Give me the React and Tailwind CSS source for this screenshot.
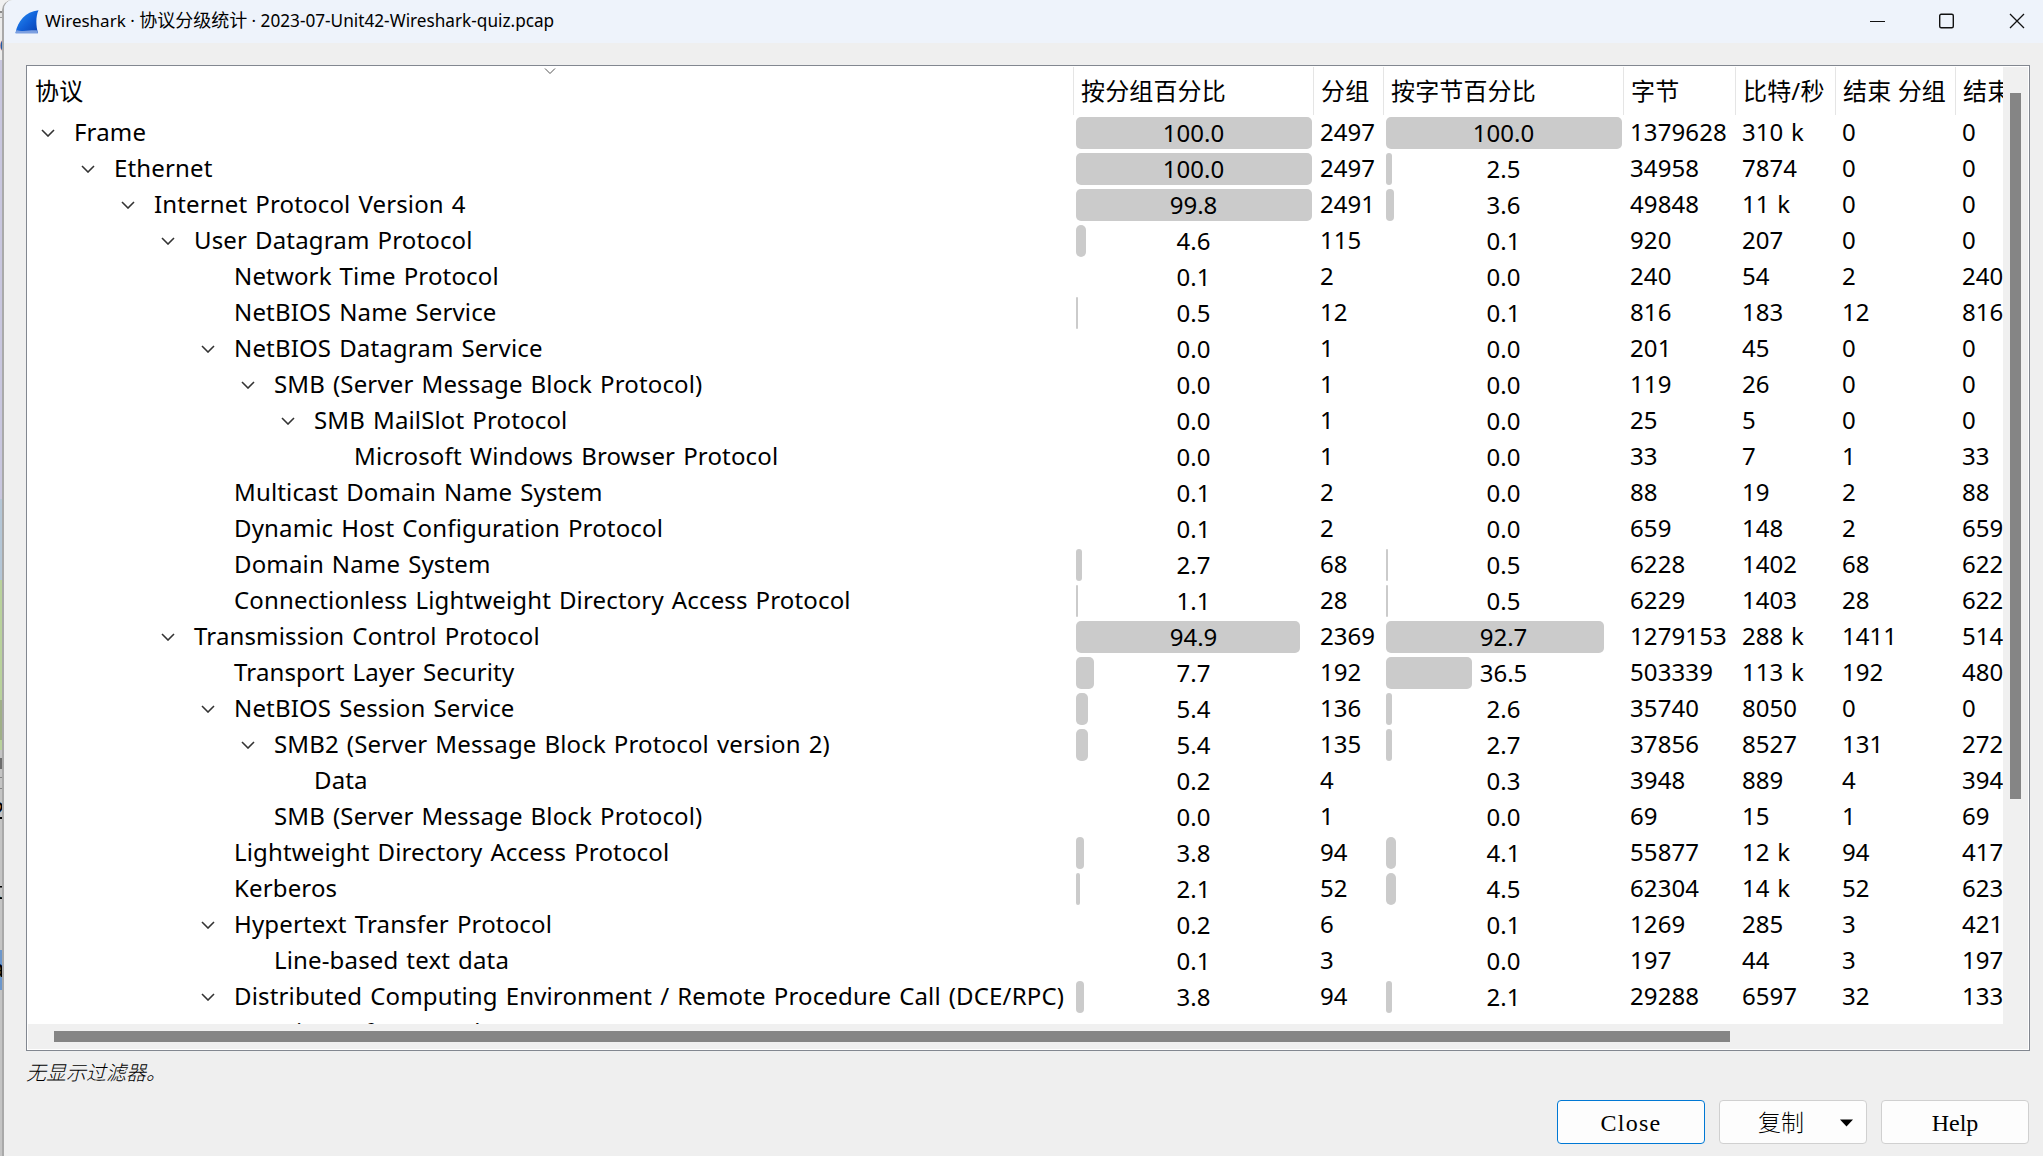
import React from "react";

const COLUMNS = "grid grid-cols-[1045px_240px_70px_240px_112px_100px_120px_49px]";

// [level, expandable, name, packet %, packets, byte %, bytes, bits/s, end packets, end bytes, packet bar px, byte bar px]
const ROWS = [
  [0, 1, "Frame", "100.0", "2497", "100.0", "1379628", "310 k", "0", "0", 236, 236],
  [1, 1, "Ethernet", "100.0", "2497", "2.5", "34958", "7874", "0", "0", 236, 6],
  [2, 1, "Internet Protocol Version 4", "99.8", "2491", "3.6", "49848", "11 k", "0", "0", 236, 8],
  [3, 1, "User Datagram Protocol", "4.6", "115", "0.1", "920", "207", "0", "0", 10, 0],
  [4, 0, "Network Time Protocol", "0.1", "2", "0.0", "240", "54", "2", "240", 0, 0],
  [4, 0, "NetBIOS Name Service", "0.5", "12", "0.1", "816", "183", "12", "816", 2, 0],
  [4, 1, "NetBIOS Datagram Service", "0.0", "1", "0.0", "201", "45", "0", "0", 0, 0],
  [5, 1, "SMB (Server Message Block Protocol)", "0.0", "1", "0.0", "119", "26", "0", "0", 0, 0],
  [6, 1, "SMB MailSlot Protocol", "0.0", "1", "0.0", "25", "5", "0", "0", 0, 0],
  [7, 0, "Microsoft Windows Browser Protocol", "0.0", "1", "0.0", "33", "7", "1", "33", 0, 0],
  [4, 0, "Multicast Domain Name System", "0.1", "2", "0.0", "88", "19", "2", "88", 0, 0],
  [4, 0, "Dynamic Host Configuration Protocol", "0.1", "2", "0.0", "659", "148", "2", "659", 0, 0],
  [4, 0, "Domain Name System", "2.7", "68", "0.5", "6228", "1402", "68", "622", 6, 2],
  [4, 0, "Connectionless Lightweight Directory Access Protocol", "1.1", "28", "0.5", "6229", "1403", "28", "622", 2, 2],
  [3, 1, "Transmission Control Protocol", "94.9", "2369", "92.7", "1279153", "288 k", "1411", "514", 224, 218],
  [4, 0, "Transport Layer Security", "7.7", "192", "36.5", "503339", "113 k", "192", "480", 18, 86],
  [4, 1, "NetBIOS Session Service", "5.4", "136", "2.6", "35740", "8050", "0", "0", 12, 6],
  [5, 1, "SMB2 (Server Message Block Protocol version 2)", "5.4", "135", "2.7", "37856", "8527", "131", "272", 12, 6],
  [6, 0, "Data", "0.2", "4", "0.3", "3948", "889", "4", "394", 0, 0],
  [5, 0, "SMB (Server Message Block Protocol)", "0.0", "1", "0.0", "69", "15", "1", "69", 0, 0],
  [4, 0, "Lightweight Directory Access Protocol", "3.8", "94", "4.1", "55877", "12 k", "94", "417", 8, 10],
  [4, 0, "Kerberos", "2.1", "52", "4.5", "62304", "14 k", "52", "623", 4, 10],
  [4, 1, "Hypertext Transfer Protocol", "0.2", "6", "0.1", "1269", "285", "3", "421", 0, 0],
  [5, 0, "Line-based text data", "0.1", "3", "0.0", "197", "44", "3", "197", 0, 0],
  [4, 1, "Distributed Computing Environment / Remote Procedure Call (DCE/RPC)", "3.8", "94", "2.1", "29288", "6597", "32", "133", 8, 6],
  [5, 0, "Microsoft Network Logon", "", "", "", "", "", "", "", 0, 0],
];

const HEADERS = ["按分组百分比", "分组", "按字节百分比", "字节", "比特/秒", "结束 分组", "结束"];

function Chevron() {
  return (
    <svg className="h-[8px] w-[14px]" viewBox="0 0 14 8" fill="none" stroke="#333" strokeWidth="1.6">
      <path d="M1 1l6 6 6-6" />
    </svg>
  );
}

function Bar({ value, width }) {
  return (
    <div className="relative h-8 pl-[3px] pt-[2px]">
      {width > 0 && <div className="h-8 rounded-[5px] bg-[#cbcbcb]" style={{ width }} />}
      <span className="absolute left-px top-0 w-[239px] pt-px text-center">{value}</span>
    </div>
  );
}

function Row({ row }) {
  const [level, open, name, pp, packets, bp, bytes, bits, ep, eb, pw, bw] = row;
  return (
    <div className={COLUMNS + " h-9 leading-[34px]"}>
      <div className="flex" style={{ paddingLeft: 13 + level * 40 }}>
        <span className="flex h-[35px] w-[33px] shrink-0 items-center">{open ? <Chevron /> : null}</span>
        <span className="tracking-[0.15px] [word-spacing:1.6px]">{name}</span>
      </div>
      <Bar value={pp} width={pw} />
      <span className="pl-[7px]">{packets}</span>
      <Bar value={bp} width={bw} />
      <span className="pl-[7px] tracking-[0.1px]">{bytes}</span>
      <span className="pl-[7px] [word-spacing:1.5px]">{bits}</span>
      <span className="pl-[7px]">{ep}</span>
      <span className="pl-[7px]">{eb}</span>
    </div>
  );
}

// Sliver of the window that lies behind the dialog
function BackWindow() {
  return (
    <div className="-mr-[8px] flex w-[12px] shrink-0 flex-col overflow-hidden bg-[#c4c4c4] text-[24px] leading-[20px]">
      <div className="h-[11px] bg-[#f0f0f0]" />
      <div className="h-[2px] bg-[#8c8c8c]" />
      <div className="h-[4px] bg-[#e2e2e2]" />
      <div className="h-px bg-[#a0a0a0]" />
      <div className="h-[42px] bg-[#ececec] pt-[15px]">
        <span className="-ml-[1px] text-[#1c5fa8]">c</span>
      </div>
      <div className="h-[439px] bg-[#c8c6de]" />
      <div className="h-[81px] bg-[#b4c6d6]" />
      <div className="h-[120px] bg-[#b9d29c]" />
      <div className="h-[40px] bg-[#a0b088]" />
      <div className="h-[10px] bg-[#b9d29c]" />
      <div className="mt-[8px] h-[11px] bg-[#6d6d6d]" />
      <div className="mt-[8px] h-[12px] border-y border-[#858585]" />
      <div className="mt-[11px] h-[20px]">
        <span className="-ml-[9px]">2</span>
      </div>
      <div className="mt-[60px] h-[20px]">
        <span className="-ml-[5px]">t</span>
      </div>
      <div className="mt-[50px] h-[40px] bg-[#6c97cc] pt-[8px]">
        <span className="-ml-[9px]">a</span>
      </div>
    </div>
  );
}

function TitleBar() {
  return (
    <div className="flex h-[43px] shrink-0 items-center rounded-tl-[9px] bg-[#eef3fb] pl-[11px]">
      <svg className="h-[24px] w-[24px]" viewBox="0 0 24 24">
        <defs>
          <linearGradient id="fin" x1="0" y1="0" x2="1" y2="1">
            <stop offset="0" stopColor="#2a93f5" />
            <stop offset="0.55" stopColor="#1160d8" />
            <stop offset="1" stopColor="#0a3fae" />
          </linearGradient>
        </defs>
        <path d="M0.500 23C3 11 10 2 23.500 0.300C20.500 7 21 16 23 23Z" fill="url(#fin)" />
        <path d="M0.500 23.500L1.500 20C8 22.500 16 19.500 22.300 20.500L23 23.500Z" fill="#7c9fe0" />
      </svg>
      <span className="-mt-[2px] ml-[6px] whitespace-pre text-[17px] leading-6">
        Wireshark · <span className="text-[18px]">协议分级统计</span> · <span className="text-[17.2px]">2023-07-Unit42-Wireshark-quiz.pcap</span>
      </span>
      <div className="-mt-[2px] ml-auto mr-[18px] flex items-center">
        <svg className="h-[16px] w-[156px]" viewBox="0 0 156 16" fill="none" stroke="#111" strokeWidth="1.4">
          <path d="M1 8.500h15" strokeWidth="1" />
          <rect x="70.700" y="1.200" width="13.600" height="13.600" rx="1.500" />
          <path d="M141 1l14 14M155 1l-14 14" strokeWidth="1.300" />
        </svg>
      </div>
    </div>
  );
}

function Table() {
  return (
    <div className="flex h-[986px] w-[2004px] flex-col border border-[#828790] bg-white p-px text-[24px]">
      <div className="flex h-[957px]">
        <div className="w-[1976px] overflow-hidden whitespace-nowrap rounded-br-sm">
          <div className={COLUMNS + " h-[48px] leading-[48px] tracking-[0.15px]"}>
            <div className="relative pl-[7px]">
              协议
              <svg className="absolute left-[516px] top-[1px] h-[7px] w-[12px]" viewBox="0 0 12 7" fill="none" stroke="#555">
                <path d="M1 0.500l5 5 5-5" />
              </svg>
            </div>
            {HEADERS.map((h, i) => (
              <div key={i} className="overflow-hidden border-l border-[#e5e5e5] pl-[7px]">{h}</div>
            ))}
          </div>
          {ROWS.map((r, i) => <Row key={i} row={r} />)}
        </div>
        <div className="w-[25px] bg-[#f0f0f0] pl-[7px] pt-[26px]">
          <div className="h-[706px] w-[11px] bg-[#858585]" />
        </div>
      </div>
      <div className="h-[25px] bg-[#f0f0f0] pl-[26px] pt-[7px]">
        <div className="h-[11px] w-[1676px] bg-[#858585]" />
      </div>
    </div>
  );
}

const BTN = "flex h-[44px] w-[148px] items-center justify-center rounded-[4px] border bg-[#fdfdfd] pt-[2px] text-[24px] font-normal leading-none";

export default function App() {
  return (
    <div className="flex h-[1156px] w-[2043px] overflow-hidden bg-[#efefef] font-['Noto_Sans','Noto_Sans_CJK_SC',sans-serif] text-black">
      <BackWindow />
      <div className="z-10 -ml-[2px] flex min-w-0 grow flex-col rounded-tl-[10px] border-l-2 border-[#a9a9a9] bg-[#efefef]">
        <TitleBar />
        <div className="flex flex-col pl-[22px] pt-[22px]">
          <Table />
          <div className="mt-[8px] text-[20px] font-light italic leading-[28px]">无显示过滤器。</div>
          <div className="mr-[14px] mt-[13px] flex justify-end gap-[14px] [font-family:'Liberation_Serif','Noto_Sans_CJK_SC',serif]">
            <button className={BTN + " border-[#0078d4] tracking-[1.3px]"}>Close</button>
            <button className={BTN + " border-[#d0d0d0]"}>
              <span className="ml-[25px] text-[23px] font-light">复制</span>
              <svg className="ml-[36px] h-[8px] w-[13px]" viewBox="0 0 13 8"><path d="M0 0.500h13l-6.500 7z" /></svg>
            </button>
            <button className={BTN + " border-[#d0d0d0]"}>Help</button>
          </div>
        </div>
      </div>
    </div>
  );
}
